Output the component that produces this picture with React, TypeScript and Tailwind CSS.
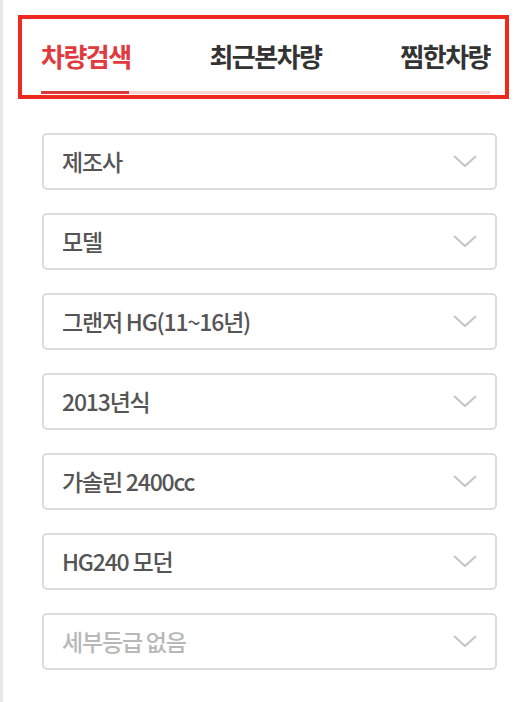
import React from "react";

const items: { label: string; placeholder?: boolean }[] = [
  { label: "제조사" },
  { label: "모델" },
  { label: "그랜저 HG(11~16년)" },
  { label: "2013년식" },
  { label: "가솔린 2400cc" },
  { label: "HG240 모던" },
  { label: "세부등급 없음", placeholder: true },
];

function Chevron() {
  return (
    <svg width="24" height="13" viewBox="0 0 24 13" fill="none" className="shrink-0">
      <path d="M1.5 1.5 L12 11 L22.5 1.5" stroke="#c4c4c4" strokeWidth="2" strokeLinecap="round" strokeLinejoin="round" />
    </svg>
  );
}

export default function App() {
  const font = { fontFamily: '"Noto Sans CJK KR", "Noto Sans", sans-serif' };
  return (
    <div className="w-[532px] h-[702px] bg-white flex overflow-hidden" style={font}>
      <div className="w-[3px] bg-[#e8e8e8] shrink-0" />
      <div className="flex-1 flex flex-col pt-[15px]">
        <div className="ml-[15px] w-[491px] h-[84px] border-[4px] border-[#ee2a1e] flex flex-col pl-[19px] pr-[15px]">
          <div className="flex justify-between items-center h-[72px]">
            <span className="text-[26px] font-bold tracking-[-1.5px] text-[#e03a3e]">차량검색</span>
            <span className="text-[26px] font-bold tracking-[-1.5px] text-[#333]">최근본차량</span>
            <span className="text-[26px] font-bold tracking-[-1.5px] text-[#333]">찜한차량</span>
          </div>
          <div className="h-[3px] bg-[#f6d4d4] flex">
            <div className="w-[88px] bg-[#d83a3c]" />
          </div>
        </div>
        <div className="flex flex-col gap-[23px] mt-[34px] ml-[39px] w-[455px]">
          {items.map((it) => (
            <div
              key={it.label}
              className="h-[57px] border-2 border-[#dcdcdc] rounded-[5px] flex items-center justify-between pl-[18px] pr-[18px]"
            >
              <span
                className={
                  "text-[23px] font-medium tracking-[-1.2px] " +
                  (it.placeholder ? "text-[#b8b8b8]" : "text-[#555555]")
                }
              >
                {it.label}
              </span>
              <Chevron />
            </div>
          ))}
        </div>
      </div>
    </div>
  );
}
